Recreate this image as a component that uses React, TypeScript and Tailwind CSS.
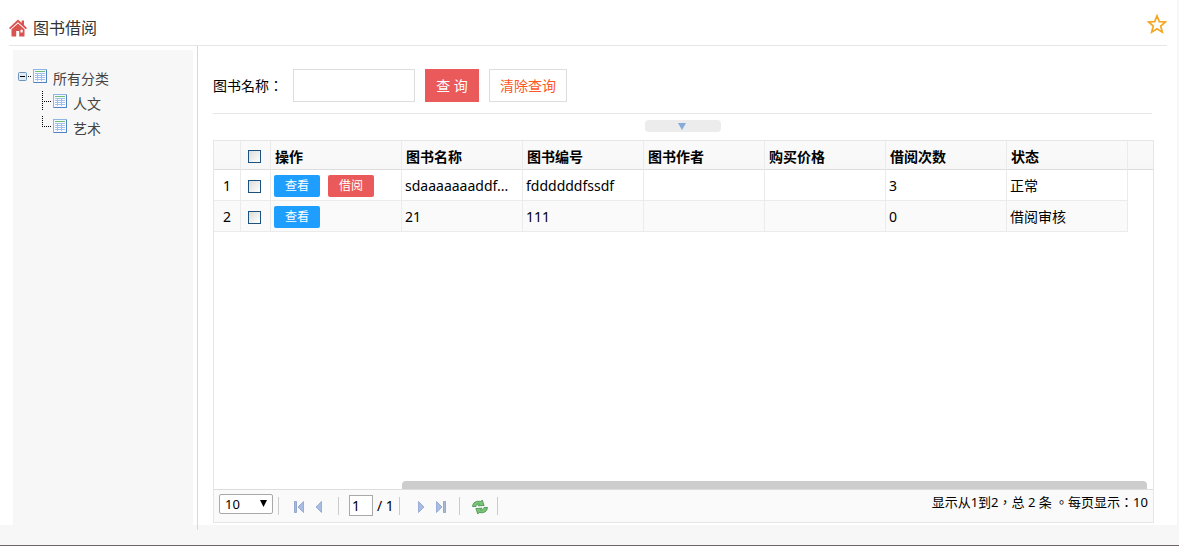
import { useState } from 'react';
import { clsx } from 'clsx';

interface Book {
  id: number;
  name: string;
  code: string;
  author: string;
  price: string;
  times: number;
  status: string;
  canBorrow: boolean;
}

const books: Book[] = [
  { id: 1, name: 'sdaaaaaaaddf...', code: 'fddddddfssdf', author: '', price: '', times: 3, status: '正常', canBorrow: true },
  { id: 2, name: '21', code: '111', author: '', price: '', times: 0, status: '借阅审核', canBorrow: false },
];

const columns = ['图书名称', '图书编号', '图书作者', '购买价格', '借阅次数', '状态'];

function HomeIcon() {
  return (
    <svg width="18" height="18" viewBox="0 0 18 18" fill="#d9534f">
      <path d="M9 0.5 0 9l1.2 1.3L9 3.2l7.800 7.100L18 9l-3-2.900V1.5h-2.300v2.400z" />
      <path d="M9 4.400 2.500 10.300V17.500h4.700v-5.500h3v5.500h5.300v-7.200zM11.500 10.800h2.200v2.600h-2.200z" fillRule="evenodd" />
    </svg>
  );
}

function StarIcon() {
  return (
    <svg width="20" height="20" viewBox="0 0 20 20" fill="none" stroke="#f5a623" strokeWidth="1.7">
      <path d="M10 1.800l2.300 5.800 6.200.4-4.800 4 1.600 6.100L10 14.700l-5.300 3.400L6.300 12 1.500 8l6.200-.4z" />
    </svg>
  );
}

function TableIcon() {
  return (
    <svg width="14" height="14" viewBox="0 0 14 14" className="mt-[3px] shrink-0">
      <rect x="0.5" y="0.5" width="13" height="13" fill="#f4f9ff" stroke="#8fb4e3" />
      <path d="M13.5 1v12.500H1" fill="none" stroke="#4f83c6" />
      <path d="M2 2.500h10" stroke="#6fbf73" />
      <path d="M2 4h10v8H2z" fill="#a3c0ea" />
      <path d="M2 5h2v1H2zM5 5h3v1H5zM9 5h3v1H9zM2 7h2v1H2zM5 7h3v1H5zM9 7h3v1H9zM2 9h2v1H2zM5 9h3v1H5zM9 9h3v1H9zM2 11h2v1H2zM5 11h3v1H5zM9 11h3v1H9z" fill="#fff" />
    </svg>
  );
}

function TreeToggle() {
  return (
    <svg width="15" height="25" viewBox="0 0 15 25" className="shrink-0">
      <rect x="0.5" y="6.5" width="8" height="8" rx="1" fill="#e3eaf2" stroke="#6b93bb" />
      <path d="M2 10.500h5" stroke="#000" />
      <path d="M10 10.500h4" stroke="#000" strokeDasharray="1 1" />
    </svg>
  );
}

function TreeLine({ last }: { last?: boolean }) {
  return (
    <svg width="11" height="25" viewBox="0 0 11 25" className="shrink-0" stroke="#000" strokeDasharray="1 1">
      <path d={last ? 'M0.5 0v11' : 'M0.5 0v19'} />
      <path d="M2 10.500h8" />
    </svg>
  );
}

function PageArrow({ flip, bar }: { flip?: boolean; bar?: boolean }) {
  return (
    <svg width="12" height="14" viewBox="0 0 12 14" className={clsx(flip && 'rotate-180')}>
      <path d={bar ? 'M10.500 1.500v11L5 7z' : 'M8.500 1.500v11L3 7z'} fill="#a9bde3" stroke="#7f9ace" strokeWidth="0.7" />
      {bar && <path d="M1.500 1.500h2v11h-2z" fill="#a9b9da" stroke="#7d93c0" strokeWidth="0.7" />}
    </svg>
  );
}

function RefreshIcon() {
  return (
    <svg width="16" height="16" viewBox="0 0 16 16" fill="#7cc47a" stroke="#3f8f45" strokeWidth="0.8" strokeLinejoin="round">
      <path d="M.500 7.500C.800 3.700 4.200 1.300 8.800 2.600L10.200 1l1.900 5.500-6.200.3 1.500-1.700C5.500 4.600 4.200 5.600 4 7.500z" />
      <path d="M15.500 8.500c-.300 3.800-3.700 6.200-8.300 4.900L5.800 15 3.900 9.500l6.200-.3-1.500 1.700c1.900.5 3.200-.5 3.400-2.400z" />
    </svg>
  );
}

function Checkbox({ label }: { label: string }) {
  return (
    <input
      type="checkbox"
      aria-label={label}
      className="block mx-auto w-[13px] h-[13px] appearance-none border border-[#1c5180] bg-linear-to-br from-[#dcdcd7] to-white checked:bg-[#1c5180]"
    />
  );
}

function Separator() {
  return <span className="w-px h-[18px] bg-[#ccc]" />;
}

export default function App() {
  const [keyword, setKeyword] = useState('');
  const [page, setPage] = useState('1');

  const smallBtn = 'w-[46px] h-[22px] rounded-xs text-xs text-white';
  const pageBtn = 'w-5 h-5 flex items-center justify-center';

  return (
    <div className="h-screen flex flex-col bg-[#f7f7f7] border-b border-[#6e6464] text-sm text-black font-['Noto_Sans','Noto_Sans_CJK_SC',sans-serif]">
      <div className="flex-1 min-h-0 mr-0.5 mb-5 bg-white flex flex-col">
        {/* Шапка */}
        <header className="h-[46px] shrink-0 ml-[9px] mr-2.5 pt-[10px] border-b border-[#e6e6e6] flex items-center justify-between">
          <h1 className="flex items-center gap-1.5 text-base text-[#333]">
            <HomeIcon />
            图书借阅
          </h1>
          <button type="button" aria-label="收藏" className="mb-2">
            <StarIcon />
          </button>
        </header>

        <div className="flex-1 min-h-0 flex">
          {/* Дерево категорий */}
          <aside className="w-[180px] shrink-0 ml-[13px] mr-1 mt-1 pt-4 pl-[5px] bg-[#f7f7f7] text-[#444]">
            <ul className="leading-[25px]">
              <li>
                <div className="flex">
                  <TreeToggle />
                  <TableIcon />
                  <a href="#all" className="ml-1.5">所有分类</a>
                </div>
                <ul className="pl-6">
                  <li className="flex">
                    <TreeLine />
                    <TableIcon />
                    <a href="#culture" className="ml-1.5">人文</a>
                  </li>
                  <li className="flex">
                    <TreeLine last />
                    <TableIcon />
                    <a href="#art" className="ml-1.5">艺术</a>
                  </li>
                </ul>
              </li>
            </ul>
          </aside>
          <div className="w-px -mb-[5px] bg-[#d8d8d8]" />

          <main className="flex-1 min-w-0 flex flex-col pl-[15px] pr-[23px] pt-[23px] pb-0.5">
            {/* Поиск */}
            <form className="flex items-center pb-[11px] border-b border-[#e6e6e6] mr-0.5" onSubmit={(e) => e.preventDefault()}>
              <label htmlFor="book-name" className="w-20 font-['Noto_Sans','Noto_Sans_CJK_TC',sans-serif]">图书名称：</label>
              <input
                id="book-name"
                value={keyword}
                onChange={(e) => setKeyword(e.target.value)}
                className="w-[122px] h-[33px] px-2 border border-[#ddd] bg-white outline-none"
              />
              <button type="submit" className="ml-2.5 w-[54px] h-[33px] bg-[#eb5a5a] text-white">查 询</button>
              <button
                type="button"
                onClick={() => setKeyword('')}
                className="ml-2.5 w-[78px] h-[33px] border border-[#ddd] bg-white text-[#ff5722]"
              >
                清除查询
              </button>
            </form>
            <div className="mt-1.5 mr-0.5 flex justify-center">
              <button type="button" aria-label="收起" className="w-[76px] h-3 rounded-sm bg-[#ececec] flex items-center justify-center">
                <svg width="8" height="7" viewBox="0 0 8 7" fill="#84abd9" className="mr-0.5">
                  <path d="M0 0h8L4 7z" />
                </svg>
              </button>
            </div>

            {/* Таблица */}
            <div className="mt-2 flex-1 min-h-0 flex flex-col border border-[#e6e6e6]">
              <div className="flex-1 min-h-0 overflow-hidden">
                <table className="w-full table-fixed border-separate border-spacing-0 text-left">
                  <colgroup>
                    <col className="w-[27px]" />
                    <col className="w-[30px]" />
                    <col className="w-[131px]" />
                    {columns.map((c) => <col key={c} className="w-[121px]" />)}
                    <col />
                  </colgroup>
                  <thead>
                    <tr className="h-[29px] bg-linear-to-b from-[#fafafa] to-[#f7f7f7] *:pt-[3px] *:border-b *:border-[#ddd] *:border-r *:border-r-[#ebebeb]">
                      <th />
                      <th className="pr-0.5"><Checkbox label="全选" /></th>
                      <th className="pl-1">操作</th>
                      {columns.map((c) => <th key={c} className="pl-1">{c}</th>)}
                      <th className="border-r-0!" />
                    </tr>
                  </thead>
                  <tbody>
                    {books.map((book, i) => (
                      <tr
                        key={book.id}
                        className={clsx(
                          'h-[31px] *:pt-0.5 *:border-b *:border-r *:border-[#ebebeb] *:whitespace-nowrap',
                          i % 2 === 1 && '*:bg-[#fafafa]'
                        )}
                      >
                        <td className="text-center">{book.id}</td>
                        <td className="pr-0.5"><Checkbox label={`选择 ${book.id}`} /></td>
                        <td className="pl-[3px]">
                          <div className="flex gap-2">
                            <button type="button" className={clsx(smallBtn, 'bg-[#1e9fff]')}>查看</button>
                            {book.canBorrow && (
                              <button type="button" className={clsx(smallBtn, 'bg-[#eb5a5a]')}>借阅</button>
                            )}
                          </div>
                        </td>
                        <td className="pl-[3px]">{book.name}</td>
                        <td className="pl-[3px]">{book.code}</td>
                        <td className="pl-[3px]">{book.author}</td>
                        <td className="pl-[3px]">{book.price}</td>
                        <td className="pl-[3px]">{book.times}</td>
                        <td className="pl-[3px]">{book.status}</td>
                        <td className="border-0! bg-white!" />
                      </tr>
                    ))}
                  </tbody>
                </table>
              </div>
              <div className="h-2 shrink-0 ml-[188px] mr-1.5 rounded-t bg-[#cdcdcd]" />

              {/* Пагинация */}
              <div className="h-[33px] shrink-0 px-[5px] border-t border-[#ddd] bg-[#fafafa] flex items-center">
                <div className="relative mr-[5px] mb-1">
                  <select aria-label="每页条数" className="block w-[54px] h-5 pl-[5px] appearance-none rounded-xs border border-[#a9a9a9] bg-white text-[13px] leading-none">
                    <option>10</option>
                    <option>20</option>
                    <option>50</option>
                  </select>
                  <svg width="7" height="7" viewBox="0 0 7 7" className="absolute right-[6px] top-[6px] pointer-events-none">
                    <path d="M0 0h7L3.500 7z" />
                  </svg>
                </div>
                <Separator />
                <div className="flex ml-2.5 mr-[9px] mt-0.5">
                  <button type="button" aria-label="首页" className={pageBtn}><PageArrow bar /></button>
                  <button type="button" aria-label="上一页" className={pageBtn}><PageArrow /></button>
                </div>
                <Separator />
                <input
                  aria-label="页码"
                  value={page}
                  onChange={(e) => setPage(e.target.value)}
                  className="ml-2.5 mr-1 mb-0.5 w-6 h-[21px] pl-0.5 border border-[#a9a9a9] bg-white outline-none"
                />
                <span className="w-[22px] whitespace-nowrap">/ 1</span>
                <Separator />
                <div className="flex ml-[11px] mr-2 mt-0.5">
                  <button type="button" aria-label="下一页" className={pageBtn}><PageArrow flip /></button>
                  <button type="button" aria-label="末页" className={pageBtn}><PageArrow flip bar /></button>
                </div>
                <Separator />
                <button type="button" aria-label="刷新" className={clsx(pageBtn, 'ml-2.5 mr-[7px] mt-0.5')}><RefreshIcon /></button>
                <Separator />
                <span className="ml-auto mb-2 text-[13px] font-['Noto_Sans','Noto_Sans_CJK_TC',sans-serif]">显示从1到2，总 2 条 。每页显示：10</span>
              </div>
            </div>
          </main>
        </div>
      </div>
    </div>
  );
}
